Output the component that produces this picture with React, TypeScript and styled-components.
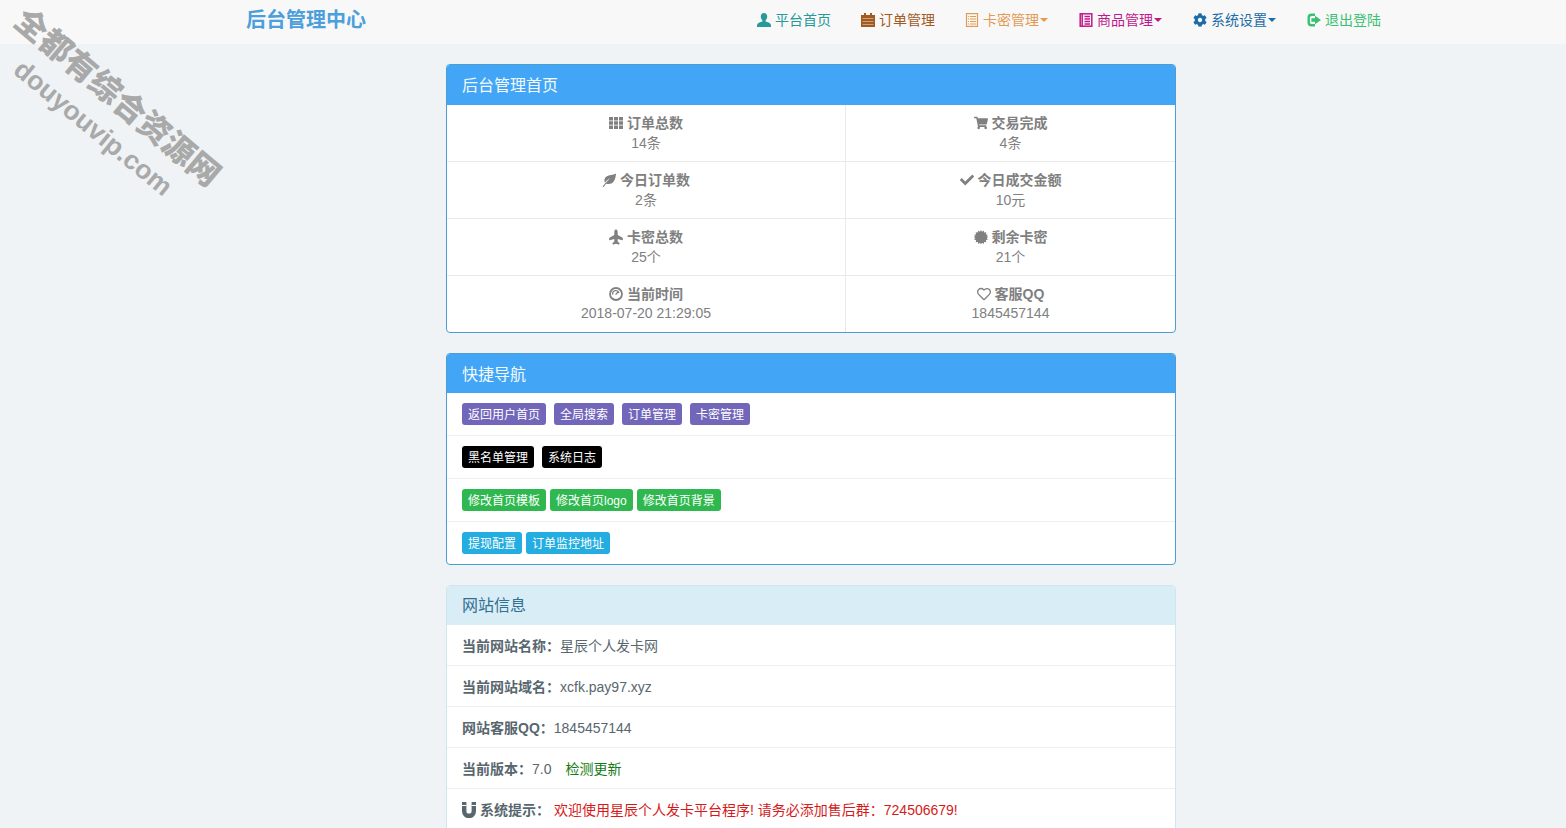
import type { ReactNode } from 'react'
import styled, { createGlobalStyle } from 'styled-components'
import { FaCheck, FaCog, FaPlane, FaRegHeart, FaShoppingCart } from 'react-icons/fa'

const GlobalStyle = createGlobalStyle`
  * {
    box-sizing: border-box;
  }

  html,
  body {
    background: #eff3f5;
    height: 828px;
    margin: 0;
    overflow: hidden;
  }

  body {
    color: #58666e;
    font-family: 'Liberation Sans', 'Noto Sans CJK SC', sans-serif;
    font-size: 14px;
    line-height: 20px;
  }
`

const UserIcon = () => (
  <svg viewBox="0 0 14 14" fill="currentColor">
    <path d="M7 0c2 0 3.2 1.5 3.2 3.6 0 1.6-.7 3-1.6 3.8v1.2c1.8.7 4.4 1.4 5.1 2.6.3.6.3 1.7.3 2.8H0c0-1.1 0-2.2.3-2.8.7-1.2 3.3-1.9 5.1-2.6V7.4C4.500 6.600 3.800 5.200 3.800 3.600 3.800 1.500 5 0 7 0z" />
  </svg>
)

const CalendarIcon = () => (
  <svg viewBox="0 0 14 14" fill="currentColor">
    <path d="M3 0h2v2h4V0h2v2h3v12H0V2h3z" />
    <path d="M1.500 5h11v.8h-11zM1.500 8h11v.8h-11zM1.500 11h11v.8h-11z" fill="#f8f8f8" opacity=".6" />
  </svg>
)

const ListAltIcon = () => (
  <svg viewBox="0 0 14 14" fill="none" stroke="currentColor" strokeWidth="1.2">
    <rect x="1.500" y="0.600" width="11" height="12.800" />
    <path d="M5 3.500h6M5 6h6M5 8.500h6M5 11h6M3 3.500h1M3 6h1M3 8.500h1M3 11h1" />
  </svg>
)

const BookIcon = () => (
  <svg viewBox="0 0 14 14" fill="none" stroke="currentColor" strokeWidth="1.5">
    <rect x="1.200" y="0.800" width="11.600" height="12.400" />
    <path d="M3.200 0.800v12.400M5.500 3.500h5.500M5.500 6h5.500M5.500 8.500h5.500M5.500 11h5.500" />
  </svg>
)

const LogOutIcon = () => (
  <svg viewBox="0 0 14 14" fill="currentColor">
    <path d="M4.500 0.500H8v2.400H4.800A1.900 1.900 0 0 0 2.900 4.800v4.400a1.900 1.900 0 0 0 1.900 1.900H8v2.400H4.500A4 4 0 0 1 .5 9.500v-5a4 4 0 0 1 4-4z" />
    <path d="M8 2.800 14 7l-6 4.200V8.800H4.400V5.200H8z" />
  </svg>
)

const GridIcon = () => (
  <svg viewBox="0 0 14 14" fill="currentColor">
    <path d="M0 1h4v3.400H0zM5 1h4v3.400H5zM10 1h4v3.400h-4zM0 5.300h4v3.400H0zM5 5.300h4v3.400H5zM10 5.300h4v3.400h-4zM0 9.600h4V13H0zM5 9.600h4V13H5zM10 9.600h4V13h-4z" />
  </svg>
)

const LeafIcon = () => (
  <svg viewBox="0 0 14 14" fill="currentColor">
    <path d="M14 .5C13.600 6 12 11 6.500 11c-1 0-1.900-.2-2.600-.6L5 8.600l3.500-3.800-4.300 3.200-1.300 1.500C1.800 7.800 2.300 5 4.500 3.500 7 1.800 11 2.300 14 .5z" />
    <path d="M4.700 8.200.6 13.700l.9.6 3.100-4.200z" />
  </svg>
)

const BurstIcon = () => (
  <svg viewBox="0 0 14 14" fill="currentColor">
    <path d="M7 0l1 1.800L9.700.6l.4 2 2.200-.4-.4 2.200 2 .4-1.200 1.700L14.500 7l-1.800 1 1.200 1.700-2 .4.400 2.200-2.200-.4-.4 2L8 12.700 7 14.500 6 12.700l-1.700 1.200-.4-2-2.200.4.400-2.200-2-.4L1.300 8-.5 7l1.800-.5L.1 4.800l2-.4-.4-2.200 2.200.4.400-2L6 1.800z" />
  </svg>
)

const DashIcon = () => (
  <svg viewBox="0 0 14 14" fill="none" stroke="currentColor">
    <circle cx="7" cy="7" r="6" strokeWidth="1.800" />
    <path d="M3.800 7.600A3.200 3.200 0 0 1 10 6M6.600 7.600 9 5" strokeWidth="1.300" />
  </svg>
)

const MagnetIcon = () => (
  <svg viewBox="0 0 14 16" width="14" height="16" fill="currentColor">
    <path d="M0 0h4.400v9a2.600 2.600 0 0 0 5.200 0V0H14v9.200a7 7 0 0 1-14 0z" />
    <path d="M0 3h4.400v1H0zM9.600 3H14v1H9.600z" fill="#fff" />
  </svg>
)

const Navbar = styled.header`
  background: #f8f8f8;
  display: flex;
  height: 44px;
  justify-content: space-between;
  padding: 0 170px 0 246px;
`

const Brand = styled.div`
  color: #4b9fdc;
  font-size: 20px;
  font-weight: 700;
  line-height: 41px;
`

const Nav = styled.nav`
  display: flex;
  height: 40px;
`

const NavLink = styled.a<{ $color: string }>`
  align-items: center;
  color: ${p => p.$color};
  display: flex;
  gap: 4px;
  height: 40px;
  padding: 0 15px;

  svg {
    flex: none;
    height: 14px;
    width: 14px;
  }
`

const Caret = styled.span`
  border-left: 4px solid transparent;
  border-right: 4px solid transparent;
  border-top: 4px solid currentColor;
  margin-left: -3px;
  margin-right: 1px;
`

const Main = styled.main`
  display: flex;
  flex-direction: column;
  gap: 20px;
  margin-left: 446px;
  padding-top: 20px;
  width: 730px;
`

const Panel = styled.section<{ $info?: boolean }>`
  background: #fff;
  border: 1px solid ${p => (p.$info ? '#cfe6f2' : '#4a9fd0')};
  border-radius: 4px;
  overflow: hidden;
`

const PanelHeading = styled.h3<{ $info?: boolean; $tall?: boolean }>`
  background: ${p => (p.$info ? '#d9edf7' : '#42a5f5')};
  color: ${p => (p.$info ? '#31708f' : '#f4fbff')};
  font-size: 16px;
  font-weight: 400;
  height: ${p => (p.$tall ? 40 : 39)}px;
  line-height: 40px;
  margin: 0;
  padding: ${p => (p.$info ? 0 : 1)}px 15px 0 15px;
`

const StatGrid = styled.div`
  display: grid;
  grid-template-columns: 399px 329px;
`

const StatCell = styled.div<{ $last: boolean; $left: boolean }>`
  border-bottom: ${p => (p.$last ? 'none' : '1px solid #e9e9e9')};
  border-right: ${p => (p.$left ? '1px solid #e9e9e9' : 'none')};
  color: #808080;
  height: ${p => (p.$last ? 56 : 57)}px;
  padding: 8px;
  text-align: center;
`

const StatTitle = styled.div`
  align-items: center;
  display: flex;
  font-weight: 700;
  gap: 4px;
  height: 20px;
  justify-content: center;

  svg {
    height: 14px;
    width: 14px;
  }
`

const StatValue = styled.div<{ $tight: boolean }>`
  line-height: 20px;
  margin-top: ${p => (p.$tight ? -1 : 0)}px;
`

const PlaneIcon = styled(FaPlane)`
  transform: rotate(-90deg) scale(1.1);
`

const ActionRow = styled.div<{ $gap: number; $last: boolean }>`
  border-bottom: ${p => (p.$last ? 'none' : '1px solid #eeeeee')};
  display: flex;
  gap: ${p => p.$gap}px;
  height: ${p => (p.$last ? 42 : 43)}px;
  padding: 10px 15px;
`

const ActionButton = styled.a<{ $bg: string }>`
  background: ${p => p.$bg};
  border-radius: 3px;
  color: #fff;
  font-size: 12px;
  height: 22px;
  line-height: 24px;
  padding: 0 6px;
`

const InfoRow = styled.div`
  align-items: center;
  border-bottom: 1px solid #eeeeee;
  display: flex;
  height: 41px;
  padding: 2px 15px 0;
  white-space: pre;
`

const InfoLabel = styled.strong`
  align-items: center;
  display: flex;
  gap: 4px;
`

const UpdateLink = styled.a`
  color: #147a14;
  margin-left: 14px;
`

const Notice = styled.span`
  color: #d41a1a;
  margin-left: 4px;
`

const Watermark = styled.div`
  left: 0;
  pointer-events: none;
  position: absolute;
  top: 0;
`

const MarkTitle = styled.div`
  color: #a9a9a9;
  font-size: 32px;
  font-weight: 900;
  left: -11px;
  line-height: 36px;
  position: absolute;
  top: 81px;
  transform: rotate(40deg);
  white-space: nowrap;
  width: 260px;
`

const MarkSite = styled.div`
  color: #a9a9a9;
  font-family: 'Liberation Sans', sans-serif;
  font-size: 26.5px;
  font-weight: 700;
  left: -4px;
  line-height: 32px;
  position: absolute;
  top: 110px;
  transform: rotate(39.5deg);
  white-space: nowrap;
  width: 190px;
`

const navLinks: { label: string; color: string; icon: ReactNode; caret?: boolean }[] = [
  { label: '平台首页', color: '#27999a', icon: <UserIcon /> },
  { label: '订单管理', color: '#a35a1e', icon: <CalendarIcon /> },
  { label: '卡密管理', color: '#e39a55', icon: <ListAltIcon />, caret: true },
  { label: '商品管理', color: '#c0188c', icon: <BookIcon />, caret: true },
  { label: '系统设置', color: '#1b6ca8', icon: <FaCog />, caret: true },
  { label: '退出登陆', color: '#38c172', icon: <LogOutIcon /> }
]

const stats: { label: string; value: string; icon: ReactNode }[] = [
  { label: '订单总数', value: '14条', icon: <GridIcon /> },
  { label: '交易完成', value: '4条', icon: <FaShoppingCart /> },
  { label: '今日订单数', value: '2条', icon: <LeafIcon /> },
  { label: '今日成交金额', value: '10元', icon: <FaCheck /> },
  { label: '卡密总数', value: '25个', icon: <PlaneIcon /> },
  { label: '剩余卡密', value: '21个', icon: <BurstIcon /> },
  { label: '当前时间', value: '2018-07-20 21:29:05', icon: <DashIcon /> },
  { label: '客服QQ', value: '1845457144', icon: <FaRegHeart /> }
]

const actionRows: { bg: string; gap: number; items: string[] }[] = [
  { bg: '#7266ba', gap: 8, items: ['返回用户首页', '全局搜索', '订单管理', '卡密管理'] },
  { bg: '#000000', gap: 8, items: ['黑名单管理', '系统日志'] },
  { bg: '#2fb84f', gap: 4, items: ['修改首页模板', '修改首页logo', '修改首页背景'] },
  { bg: '#23ade0', gap: 4, items: ['提现配置', '订单监控地址'] }
]

export default function App() {
  return (
    <>
      <GlobalStyle />
      <Navbar>
        <Brand>后台管理中心</Brand>
        <Nav>
          {navLinks.map(link => (
            <NavLink key={link.label} $color={link.color}>
              {link.icon}
              {link.label}
              {link.caret && <Caret />}
            </NavLink>
          ))}
        </Nav>
      </Navbar>
      <Main>
        <Panel>
          <PanelHeading $tall>后台管理首页</PanelHeading>
          <StatGrid>
            {stats.map((stat, index) => (
              <StatCell key={stat.label} $left={index % 2 === 0} $last={index >= 6}>
                <StatTitle>
                  {stat.icon}
                  {stat.label}
                </StatTitle>
                <StatValue $tight={index >= 6}>{stat.value}</StatValue>
              </StatCell>
            ))}
          </StatGrid>
        </Panel>
        <Panel>
          <PanelHeading>快捷导航</PanelHeading>
          {actionRows.map((row, index) => (
            <ActionRow key={row.items[0]} $gap={row.gap} $last={index === actionRows.length - 1}>
              {row.items.map(item => (
                <ActionButton key={item} $bg={row.bg}>
                  {item}
                </ActionButton>
              ))}
            </ActionRow>
          ))}
        </Panel>
        <Panel $info>
          <PanelHeading $info>网站信息</PanelHeading>
          <InfoRow>
            <InfoLabel>当前网站名称：</InfoLabel>星辰个人发卡网
          </InfoRow>
          <InfoRow>
            <InfoLabel>当前网站域名：</InfoLabel>xcfk.pay97.xyz
          </InfoRow>
          <InfoRow>
            <InfoLabel>网站客服QQ：</InfoLabel>1845457144
          </InfoRow>
          <InfoRow>
            <InfoLabel>当前版本：</InfoLabel>7.0
            <UpdateLink>检测更新</UpdateLink>
          </InfoRow>
          <InfoRow>
            <InfoLabel>
              <MagnetIcon />
              系统提示：
            </InfoLabel>
            <Notice>欢迎使用星辰个人发卡平台程序! 请务必添加售后群：724506679!</Notice>
          </InfoRow>
        </Panel>
      </Main>
      <Watermark>
        <MarkTitle>全都有综合资源网</MarkTitle>
        <MarkSite>douyouvip.com</MarkSite>
      </Watermark>
    </>
  )
}
